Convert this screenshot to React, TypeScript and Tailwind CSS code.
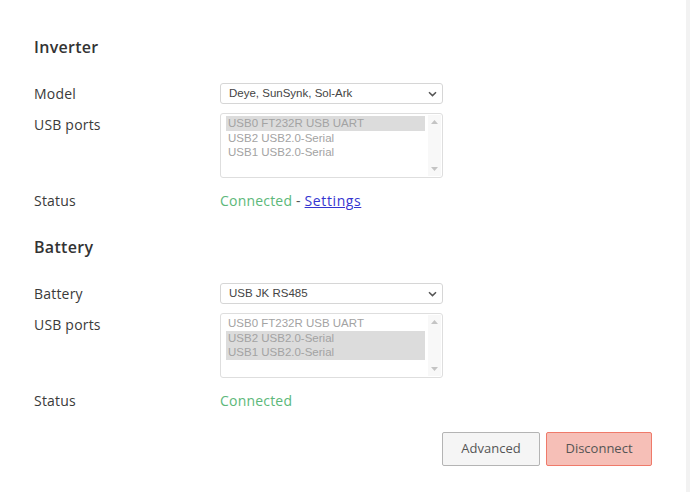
import type { ReactNode } from "react";

const LABEL_FONT = "font-['Open_Sans',sans-serif]";
const FORM_FONT = "font-['Liberation_Sans',Arial,sans-serif]";

const PORTS = ["USB0 FT232R USB UART", "USB2 USB2.0-Serial", "USB1 USB2.0-Serial"];

function Chevron() {
  return (
    <svg width="9" height="6" viewBox="0 0 9 6" className="text-[#555]">
      <path d="M1 1.2 L4.5 4.6 L8 1.2" fill="none" stroke="currentColor" strokeWidth="1.5" />
    </svg>
  );
}

function Select({ value }: { value: string }) {
  return (
    <div
      className={`flex h-[21px] w-[223px] items-center justify-between rounded-[3px] border border-[#d6d6d6] bg-white pl-[8px] pr-[5px] text-[11.5px] text-[#444] ${FORM_FONT}`}
    >
      <span>{value}</span>
      <Chevron />
    </div>
  );
}

function PortList({ selected }: { selected: number[] }) {
  return (
    <div
      className={`flex h-[65px] w-[223px] rounded-[3px] border border-[#dedede] bg-white ${FORM_FONT}`}
    >
      <div className="flex-1 pl-[5px] pt-[2px] pr-[3px]">
        {PORTS.map((p, i) => (
          <div
            key={p}
            className={`h-[14.5px] pl-[2px] text-[11.5px] leading-[14.5px] text-[#a3a3a3] ${
              selected.includes(i) ? "bg-[#dcdcdc]" : ""
            }`}
          >
            {p}
          </div>
        ))}
      </div>
      <div className="my-[1px] mr-[1px] flex w-[13px] flex-col items-center justify-between bg-[#f8f8f8] py-[5px]">
        <svg width="7" height="4" viewBox="0 0 7 4">
          <path d="M0 4 L3.5 0 L7 4 Z" fill="#c4c4c4" />
        </svg>
        <svg width="7" height="4" viewBox="0 0 7 4">
          <path d="M0 0 L3.5 4 L7 0 Z" fill="#c4c4c4" />
        </svg>
      </div>
    </div>
  );
}

function Row({ label, children, labelLead }: { label: string; children: ReactNode; labelLead: string }) {
  return (
    <div className="flex items-start">
      <div className={`w-[186px] text-[14px] tracking-[0.2px] text-[#3a3a3a] ${labelLead}`}>{label}</div>
      {children}
    </div>
  );
}

function Heading({ children }: { children: ReactNode }) {
  return <h2 className="text-[16px] font-semibold leading-[20px] tracking-[0.3px] text-[#333]">{children}</h2>;
}

function Status({ settings }: { settings?: boolean }) {
  return (
    <div className="flex text-[14px] leading-[22px] tracking-[0.2px]">
      <div className="w-[186px] text-[#3a3a3a]">Status</div>
      <div>
        <span className="text-[#5cb87a]">Connected</span>
        {settings && (
          <>
            <span className="text-[#555]"> - </span>
            <a href="#" className="tracking-[0.6px] text-[#3535d0] underline">
              Settings
            </a>
          </>
        )}
      </div>
    </div>
  );
}

export default function App() {
  return (
    <div className={`flex h-[492px] w-[690px] bg-white ${LABEL_FONT}`}>
      <div className="flex flex-1 flex-col pl-[34px] pr-[34px] pt-[37px]">
        <Heading>Inverter</Heading>
        <div className="mt-[26px]">
          <Row label="Model" labelLead="leading-[21px]">
            <Select value="Deye, SunSynk, Sol-Ark" />
          </Row>
        </div>
        <div className="mt-[9px]">
          <Row label="USB ports" labelLead="leading-[24px]">
            <PortList selected={[0]} />
          </Row>
        </div>
        <div className="mt-[12px]">
          <Status settings />
        </div>

        <div className="mt-[25px]">
          <Heading>Battery</Heading>
        </div>
        <div className="mt-[26px]">
          <Row label="Battery" labelLead="leading-[21px]">
            <Select value="USB JK RS485" />
          </Row>
        </div>
        <div className="mt-[9px]">
          <Row label="USB ports" labelLead="leading-[24px]">
            <PortList selected={[1, 2]} />
          </Row>
        </div>
        <div className="mt-[12px]">
          <Status />
        </div>

        <div className="mt-[20px] flex justify-end gap-[6px]">
          <button className="h-[34px] w-[98px] rounded-[2px] border border-[#b4b4b4] bg-[#f5f5f5] text-[13px] text-[#555]">
            Advanced
          </button>
          <button className="h-[34px] w-[106px] rounded-[2px] border border-[#ef7a6a] bg-[#f6bfb7] text-[13px] text-[#555]">
            Disconnect
          </button>
        </div>
      </div>
      <div className="w-[4px] bg-[#f2f2f2]" />
    </div>
  );
}
